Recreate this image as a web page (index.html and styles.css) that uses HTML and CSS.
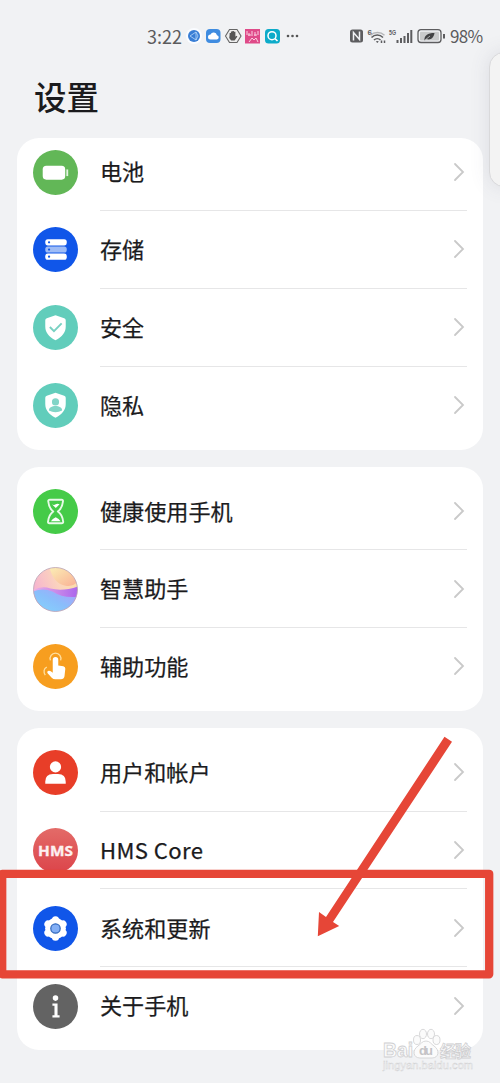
FILE: index.html
```html
<!DOCTYPE html>
<html lang="zh-CN">
<head>
<meta charset="utf-8">
<title>设置</title>
<link rel="stylesheet" href="styles.css">
</head>
<body>
<div class="phone">
  <header class="status">
    <span class="time">3:22</span>
    <svg class="apps" width="120" height="20" viewBox="0 0 120 20">
      <circle cx="9" cy="10" r="8" fill="#fafcff"/>
      <circle cx="9" cy="10" r="6" fill="#397ed5"/>
      <path d="M5 10l6-4v8zM11 6l2 4-2 4" fill="none" stroke="#b9d9fa" stroke-width=".8"/>
      <rect x="21" y="3" width="14.500" height="14" rx="4" fill="#3f8ce0"/>
      <path d="M25.500 13.500a2.500 2.500 0 0 1 0-5 3.500 3.500 0 0 1 6.500.7 2.200 2.200 0 0 1 0 4.300z" fill="#fff"/>
      <path d="M44.500 3.500h7.500l4 6.500-4 6.500h-7.500l-4-6.500z" fill="#eee" stroke="#666" stroke-width="1.100"/>
      <path d="M44.600 9v-2h1.300V5.500h1.500V5h1.500v.7h1.500v5l1-1 1 .8-2.800 4h-3.400l-2-2.500z" fill="#555"/>
      <rect x="60" y="3" width="15" height="14.500" fill="#df4b89"/>
      <path d="M62 5v4m2-2v3m3-5v5m3-4v4m3-5v4M63 9h3m3 0h3M64 16l3-4 2 2 2-2 2 4" fill="none" stroke="#fbd0e2" stroke-width="1"/>
      <rect x="80" y="3" width="15" height="14.500" rx="3.500" fill="#0cabc9"/>
      <circle cx="87" cy="9.700" r="4" fill="none" stroke="#fff" stroke-width="1.500"/>
      <path d="M90 12.700l2.500 2.300" stroke="#fff" stroke-width="1.600"/>
      <g fill="#555"><circle cx="103" cy="10" r="1.300"/><circle cx="107.500" cy="10" r="1.300"/><circle cx="112" cy="10" r="1.300"/></g>
    </svg>
    <svg class="signals" width="98" height="20" viewBox="0 0 98 20">
      <rect x="1" y="3.500" width="13" height="13" rx="2.500" fill="#5d5d5f"/>
      <path d="M4.500 14.500v-8l6 7v-8" fill="none" stroke="#f1f2f4" stroke-width="1.500"/>
      <text class="mini" x="18.500" y="8.500">6</text>
      <path d="M21.500 9.200a10.500 10.500 0 0 1 14 0" fill="none" stroke="#b5b6b8" stroke-width="1.500"/>
      <path d="M22.500 11.500a8 8 0 0 1 11.500 0M25 14a4.700 4.700 0 0 1 6.500 0" fill="none" stroke="#5d5d5f" stroke-width="1.600"/>
      <path d="M26.800 15.500l1.500 1.500 1.500-1.500q-1.500-1-3 0z" fill="#5d5d5f"/>
      <path d="M32.500 14.500v2.500M35.500 14.500v2.500" stroke="#5d5d5f" stroke-width="1.500"/>
      <text class="mini" x="40" y="8.500" textLength="7" lengthAdjust="spacingAndGlyphs">5G</text>
      <path d="M48.500 14v3M52 12v5M55.500 10v7M59 7v10M62.300 4v13" stroke="#5d5d5f" stroke-width="2"/>
      <rect x="69" y="3.700" width="23" height="12.800" rx="3" fill="#f1f2f4" stroke="#5d5d5f" stroke-width="1.300"/>
      <rect x="71" y="5.700" width="19" height="8.800" rx="1" fill="#c9cacb"/>
      <path d="M75.500 14.500c-.5-5 3-7.500 10-7.500-.8 5-4 7.500-8 6z" fill="#414143"/>
      <path d="M75.500 14.500l5.500-4.500" stroke="#c9cacb" stroke-width=".8"/>
      <path d="M95 8v4.500" stroke="#5d5d5f" stroke-width="2"/>
    </svg>
    <span class="percent">98%</span>
  </header>
  <h1 class="title">设置</h1>
  <main class="groups">
    <section class="card first">
      <div class="row">
        <svg class="icon" viewBox="0 0 44 44"><circle cx="22" cy="22" r="22" fill="#62b757"/><rect x="9.500" y="15.500" width="22" height="13.500" rx="3.500" fill="#fff"/><path d="M33.500 19v6.500" stroke="#e4f4e1" stroke-width="1.800"/></svg>
        <div class="label"><span>电池</span><svg class="arrow" viewBox="0 0 12 20"><path d="M2 2l8 8-8 8"/></svg></div>
      </div>
      <div class="row">
        <svg class="icon" viewBox="0 0 44 44"><circle cx="22" cy="22" r="22" fill="#1056e9"/><rect x="12" y="12" width="21" height="6" rx="2.500" fill="#fff"/><rect x="12" y="19" width="21" height="6" rx="2.500" fill="#9dbbf6"/><rect x="12" y="26" width="21" height="6" rx="2.500" fill="#fff"/><g fill="#1056e9"><circle cx="15.700" cy="15" r="1.100"/><circle cx="15.700" cy="22" r="1.100"/><circle cx="15.700" cy="29" r="1.100"/></g></svg>
        <div class="label"><span>存储</span><svg class="arrow" viewBox="0 0 12 20"><path d="M2 2l8 8-8 8"/></svg></div>
      </div>
      <div class="row">
        <svg class="icon" viewBox="0 0 44 44"><circle cx="22" cy="22" r="22" fill="#61cdbb"/><path d="M22 10l8.500 3q1.500.5 1.500 2v6c0 6-3.500 10-10 13.500C15.500 31 12 27 12 21v-6q0-1.500 1.500-2z" fill="#fff"/><path d="M16.500 21.500l4 4 7.500-7.500" fill="none" stroke="#78d1c2" stroke-width="1.900"/></svg>
        <div class="label"><span>安全</span><svg class="arrow" viewBox="0 0 12 20"><path d="M2 2l8 8-8 8"/></svg></div>
      </div>
      <div class="row">
        <svg class="icon" viewBox="0 0 44 44"><circle cx="22" cy="22" r="22" fill="#61cdbb"/><path d="M22 9.500l8.500 3q1.500.5 1.500 2v6c0 6-3.500 10-10 13.500C15.500 30.500 12 26.500 12 20.500v-6q0-1.500 1.500-2z" fill="#fff"/><circle cx="22" cy="18.500" r="3.500" fill="#82d5c7"/><path d="M15.500 27c0-3 3-4.500 6.500-4.500s6.500 1.500 6.500 4.500q-6.500 3-13 0z" fill="#82d5c7"/></svg>
        <div class="label"><span>隐私</span><svg class="arrow" viewBox="0 0 12 20"><path d="M2 2l8 8-8 8"/></svg></div>
      </div>
    </section>
    <section class="card">
      <div class="row">
        <svg class="icon" viewBox="0 0 44 44"><circle cx="22" cy="22" r="22" fill="#45cb48"/><path d="M16.500 10.500h11.500q1.500 0 1.300 1.500-.8 7-5 10 4.500 3 5.200 10 .2 1.500-1.500 1.500h-12q-1.500 0-1.300-1.500.8-7 5.100-10-4.200-3-4.900-10-.1-1.500 1.600-1.500z" fill="none" stroke="#e8fae8" stroke-width="1.900" stroke-linejoin="round"/><path d="M18.500 15q2 1.200 3.700 0t3.800 0l-3.700 3.500zM17.500 31.500q1.500-2.500 4.700-4 3.300 1.500 4.800 4z" fill="#fff"/></svg>
        <div class="label"><span>健康使用手机</span><svg class="arrow" viewBox="0 0 12 20"><path d="M2 2l8 8-8 8"/></svg></div>
      </div>
      <div class="row">
        <svg class="icon" viewBox="0 0 44 44">
          <defs>
            <clipPath id="orb"><circle cx="22" cy="22" r="21.500"/></clipPath>
            <linearGradient id="sky" x1="0" y1=".4" x2="1" y2="0"><stop offset="0" stop-color="#f6b4cf"/><stop offset=".5" stop-color="#fbd4bd"/><stop offset="1" stop-color="#fbe3a2"/></linearGradient>
            <linearGradient id="wave" x1="0" y1="0" x2="1" y2="0"><stop offset="0" stop-color="#eab0e6"/><stop offset="1" stop-color="#ab65ec"/></linearGradient>
            <linearGradient id="sea" x1="0" y1="1" x2="1" y2="0"><stop offset="0" stop-color="#82d6fc"/><stop offset=".5" stop-color="#8abdfb"/><stop offset="1" stop-color="#b49bfa"/></linearGradient>
            <linearGradient id="sun" x1="0" y1="0" x2="1" y2="1"><stop offset="0" stop-color="#fbefb6"/><stop offset="1" stop-color="#f9af94"/></linearGradient>
          </defs>
          <g clip-path="url(#orb)"><path d="M0 0h44v44H0z" fill="url(#sky)"/><path d="M16 0q4 16 15 18 8 2 13-4V0z" fill="url(#sun)"/><path d="M0 23q8-5 17-2 12 3 27-2v20H0z" fill="url(#wave)"/><path d="M0 24q10-4 19 0 11 7 25 5v15H0z" fill="url(#sea)"/></g>
          <circle cx="22" cy="22" r="21.500" fill="none" stroke="#bba6b8" stroke-width=".8"/>
        </svg>
        <div class="label"><span>智慧助手</span><svg class="arrow" viewBox="0 0 12 20"><path d="M2 2l8 8-8 8"/></svg></div>
      </div>
      <div class="row">
        <svg class="icon" viewBox="0 0 44 44"><circle cx="22" cy="22" r="22" fill="#f79e1f"/><path d="M19.300 28V15.500a2.700 2.700 0 0 1 5.400 0V21l5 .8q2 .5 1.900 2.500l-.8 7.200q-.5 3-3.500 3h-5.500q-2 0-3.500-1.500l-4-4.500q-1-1.300.3-2.200 2.200-.8 4.700 1.700z" fill="#fff"/><path d="M17 16a5.300 5.300 0 1 1 10 0" fill="none" stroke="#ffdf9f" stroke-width="1.300"/><path d="M13.500 22.500c-3 1-3.500 5-1.500 8" fill="none" stroke="#ffdf9f" stroke-width="1.300"/></svg>
        <div class="label"><span>辅助功能</span><svg class="arrow" viewBox="0 0 12 20"><path d="M2 2l8 8-8 8"/></svg></div>
      </div>
    </section>
    <section class="card">
      <div class="row">
        <svg class="icon" viewBox="0 0 44 44"><circle cx="22" cy="22" r="22" fill="#e83e28"/><circle cx="22" cy="16.500" r="5.500" fill="#fff"/><path d="M12 33v-2q0-7.500 7.500-7.500h5Q32 23.500 32 31v2z" fill="#fff"/></svg>
        <div class="label"><span>用户和帐户</span><svg class="arrow" viewBox="0 0 12 20"><path d="M2 2l8 8-8 8"/></svg></div>
      </div>
      <div class="row">
        <svg class="icon" viewBox="0 0 44 44"><defs><linearGradient id="hms" x1="0" y1="0" x2="0" y2="1"><stop offset="0" stop-color="#e36b68"/><stop offset="1" stop-color="#dc444a"/></linearGradient></defs><circle cx="22" cy="22" r="22" fill="url(#hms)"/><text class="hms" x="5" y="27" textLength="34" lengthAdjust="spacingAndGlyphs">HMS</text></svg>
        <div class="label"><span class="latin">HMS Core</span><svg class="arrow" viewBox="0 0 12 20"><path d="M2 2l8 8-8 8"/></svg></div>
      </div>
      <div class="row">
        <svg class="icon" viewBox="0 0 44 44"><circle cx="22" cy="22" r="22" fill="#1056e9"/><circle cx="22" cy="22" r="10.200" fill="#fff"/><path d="M22 13.500v17M14.600 17.700l14.800 8.600M29.400 17.700l-14.800 8.600" stroke="#fff" stroke-width="7" stroke-linecap="round"/><circle cx="22" cy="22" r="4.600" fill="#83aff5" stroke="#3269bd" stroke-width="1.200"/></svg>
        <div class="label"><span>系统和更新</span><svg class="arrow" viewBox="0 0 12 20"><path d="M2 2l8 8-8 8"/></svg></div>
      </div>
      <div class="row">
        <svg class="icon" viewBox="0 0 44 44"><circle cx="22" cy="22" r="22" fill="#636363"/><circle cx="22" cy="13.800" r="2.700" fill="#fff"/><path d="M19 19h5v11.500h2v2.300h-7v-2.300h2V21.300h-2z" fill="#fff"/></svg>
        <div class="label"><span>关于手机</span><svg class="arrow" viewBox="0 0 12 20"><path d="M2 2l8 8-8 8"/></svg></div>
      </div>
    </section>
  </main>
  <div class="edge-panel"></div>
  <svg class="marks" width="500" height="1083" viewBox="0 0 500 1083">
    <rect x="2.200" y="873.800" width="487" height="100.500" fill="none" stroke="#e64637" stroke-width="8.300" stroke-linejoin="round"/>
    <path d="M444.500 736.800l7.500 5L333 922l6.200 4-21.400 10.300L319 912l7 5z" fill="#e64637"/>
    <g class="watermark">
      <text class="brand" x="383" y="1057" textLength="30" lengthAdjust="spacingAndGlyphs">Bai</text>
      <path d="M426 1041c-4 0-5 3-8 5-6 4-5 12 2 12h12c7 0 8-8 2-12-3-2-4-5-8-5z"/>
      <ellipse cx="417" cy="1040" rx="3.500" ry="4.500"/><ellipse cx="423" cy="1034" rx="3.500" ry="4.700"/><ellipse cx="431" cy="1034" rx="3.500" ry="4.700"/><ellipse cx="436.500" cy="1040" rx="3.500" ry="4.500"/>
      <text class="du" x="419" y="1055" textLength="14">du</text>
      <text class="brand cn" x="440" y="1056.500" textLength="31">经验</text>
      <text class="site" x="383" y="1069" textLength="90">jingyan.baidu.com</text>
    </g>
  </svg>
</div>
</body>
</html>
```

FILE: styles.css
```css
* { box-sizing: border-box; }

body {
  margin: 0;
  background: #f1f2f4;
  color: #1b1b1d;
  font-family: "Noto Sans CJK SC", sans-serif;
}

.phone {
  position: relative;
  width: 500px;
  height: 1083px;
  overflow: hidden;
}

.status {
  display: flex;
  align-items: center;
  height: 36px;
  margin-top: 18px;
  padding-left: 147px;
  color: #5b5b5d;
  font-size: 18px;
  line-height: 36px;
}

.time { width: 38px; }
.apps { flex: none; margin-right: 44px; }
.signals { flex: none; margin-right: 3px; }
.percent { font-size: 17px; letter-spacing: -.7px; }
.mini { font: bold 8px "Liberation Sans", sans-serif; fill: #5d5d5f; }

.title {
  margin: 18px 0 1px 34px;
  height: 48px;
  font-size: 32.5px;
  line-height: 48px;
  font-weight: 500;
}

.groups {
  display: flex;
  flex-direction: column;
  gap: 17px;
  padding: 16.500px 17px 0;
}

.card {
  padding: 5.500px 16px;
  border-radius: 22px;
  background: #fff;
}

.card.first { padding-top: 0; }
.card.first .row:first-child { margin-top: -4.300px; }

.row {
  display: flex;
  align-items: center;
  gap: 22px;
  height: 77.800px;
}

.icon { flex: none; width: 45px; height: 45px; }

.label {
  display: flex;
  flex: 1;
  align-items: center;
  justify-content: space-between;
  height: 100%;
  padding-right: 2px;
  border-bottom: 1px solid #e6e6e7;
  font-size: 22.100px;
  line-height: 32px;
}

.label span {
  padding-bottom: 2.500px;
  -webkit-text-stroke: .25px currentColor;
}

.row:last-child .label { border-bottom-color: transparent; }

.label .latin { padding-bottom: 1px; letter-spacing: .4px; }

.arrow {
  width: 12px;
  height: 20px;
  fill: none;
  stroke: #c9c9c9;
  stroke-width: 1.8;
  stroke-linecap: round;
}

.hms { font: bold 13px "Noto Sans", sans-serif; fill: #fdf0f0; stroke: #fdf0f0; stroke-width: .3; }

.edge-panel {
  position: absolute;
  top: 52px;
  left: 489px;
  width: 40px;
  height: 135px;
  border: 1px solid #d9d9db;
  border-radius: 15px;
  background: #f3f3f3;
  box-shadow: 0 0 20px rgba(80, 80, 110, .13);
}

.marks { position: absolute; top: 0; left: 0; }

.watermark {
  fill: #fbfbfb;
  stroke: #cfcfd1;
  stroke-width: .8;
}

.brand { font: bold 20px "Liberation Sans", sans-serif; }
.brand.cn { font: bold 16px "Noto Sans CJK SC", sans-serif; }
.du { font: bold 13px "Liberation Sans", sans-serif; fill: #c4c4c6; stroke: none; }
.site { font: 11px "Liberation Sans", sans-serif; stroke-width: .4; }
```
